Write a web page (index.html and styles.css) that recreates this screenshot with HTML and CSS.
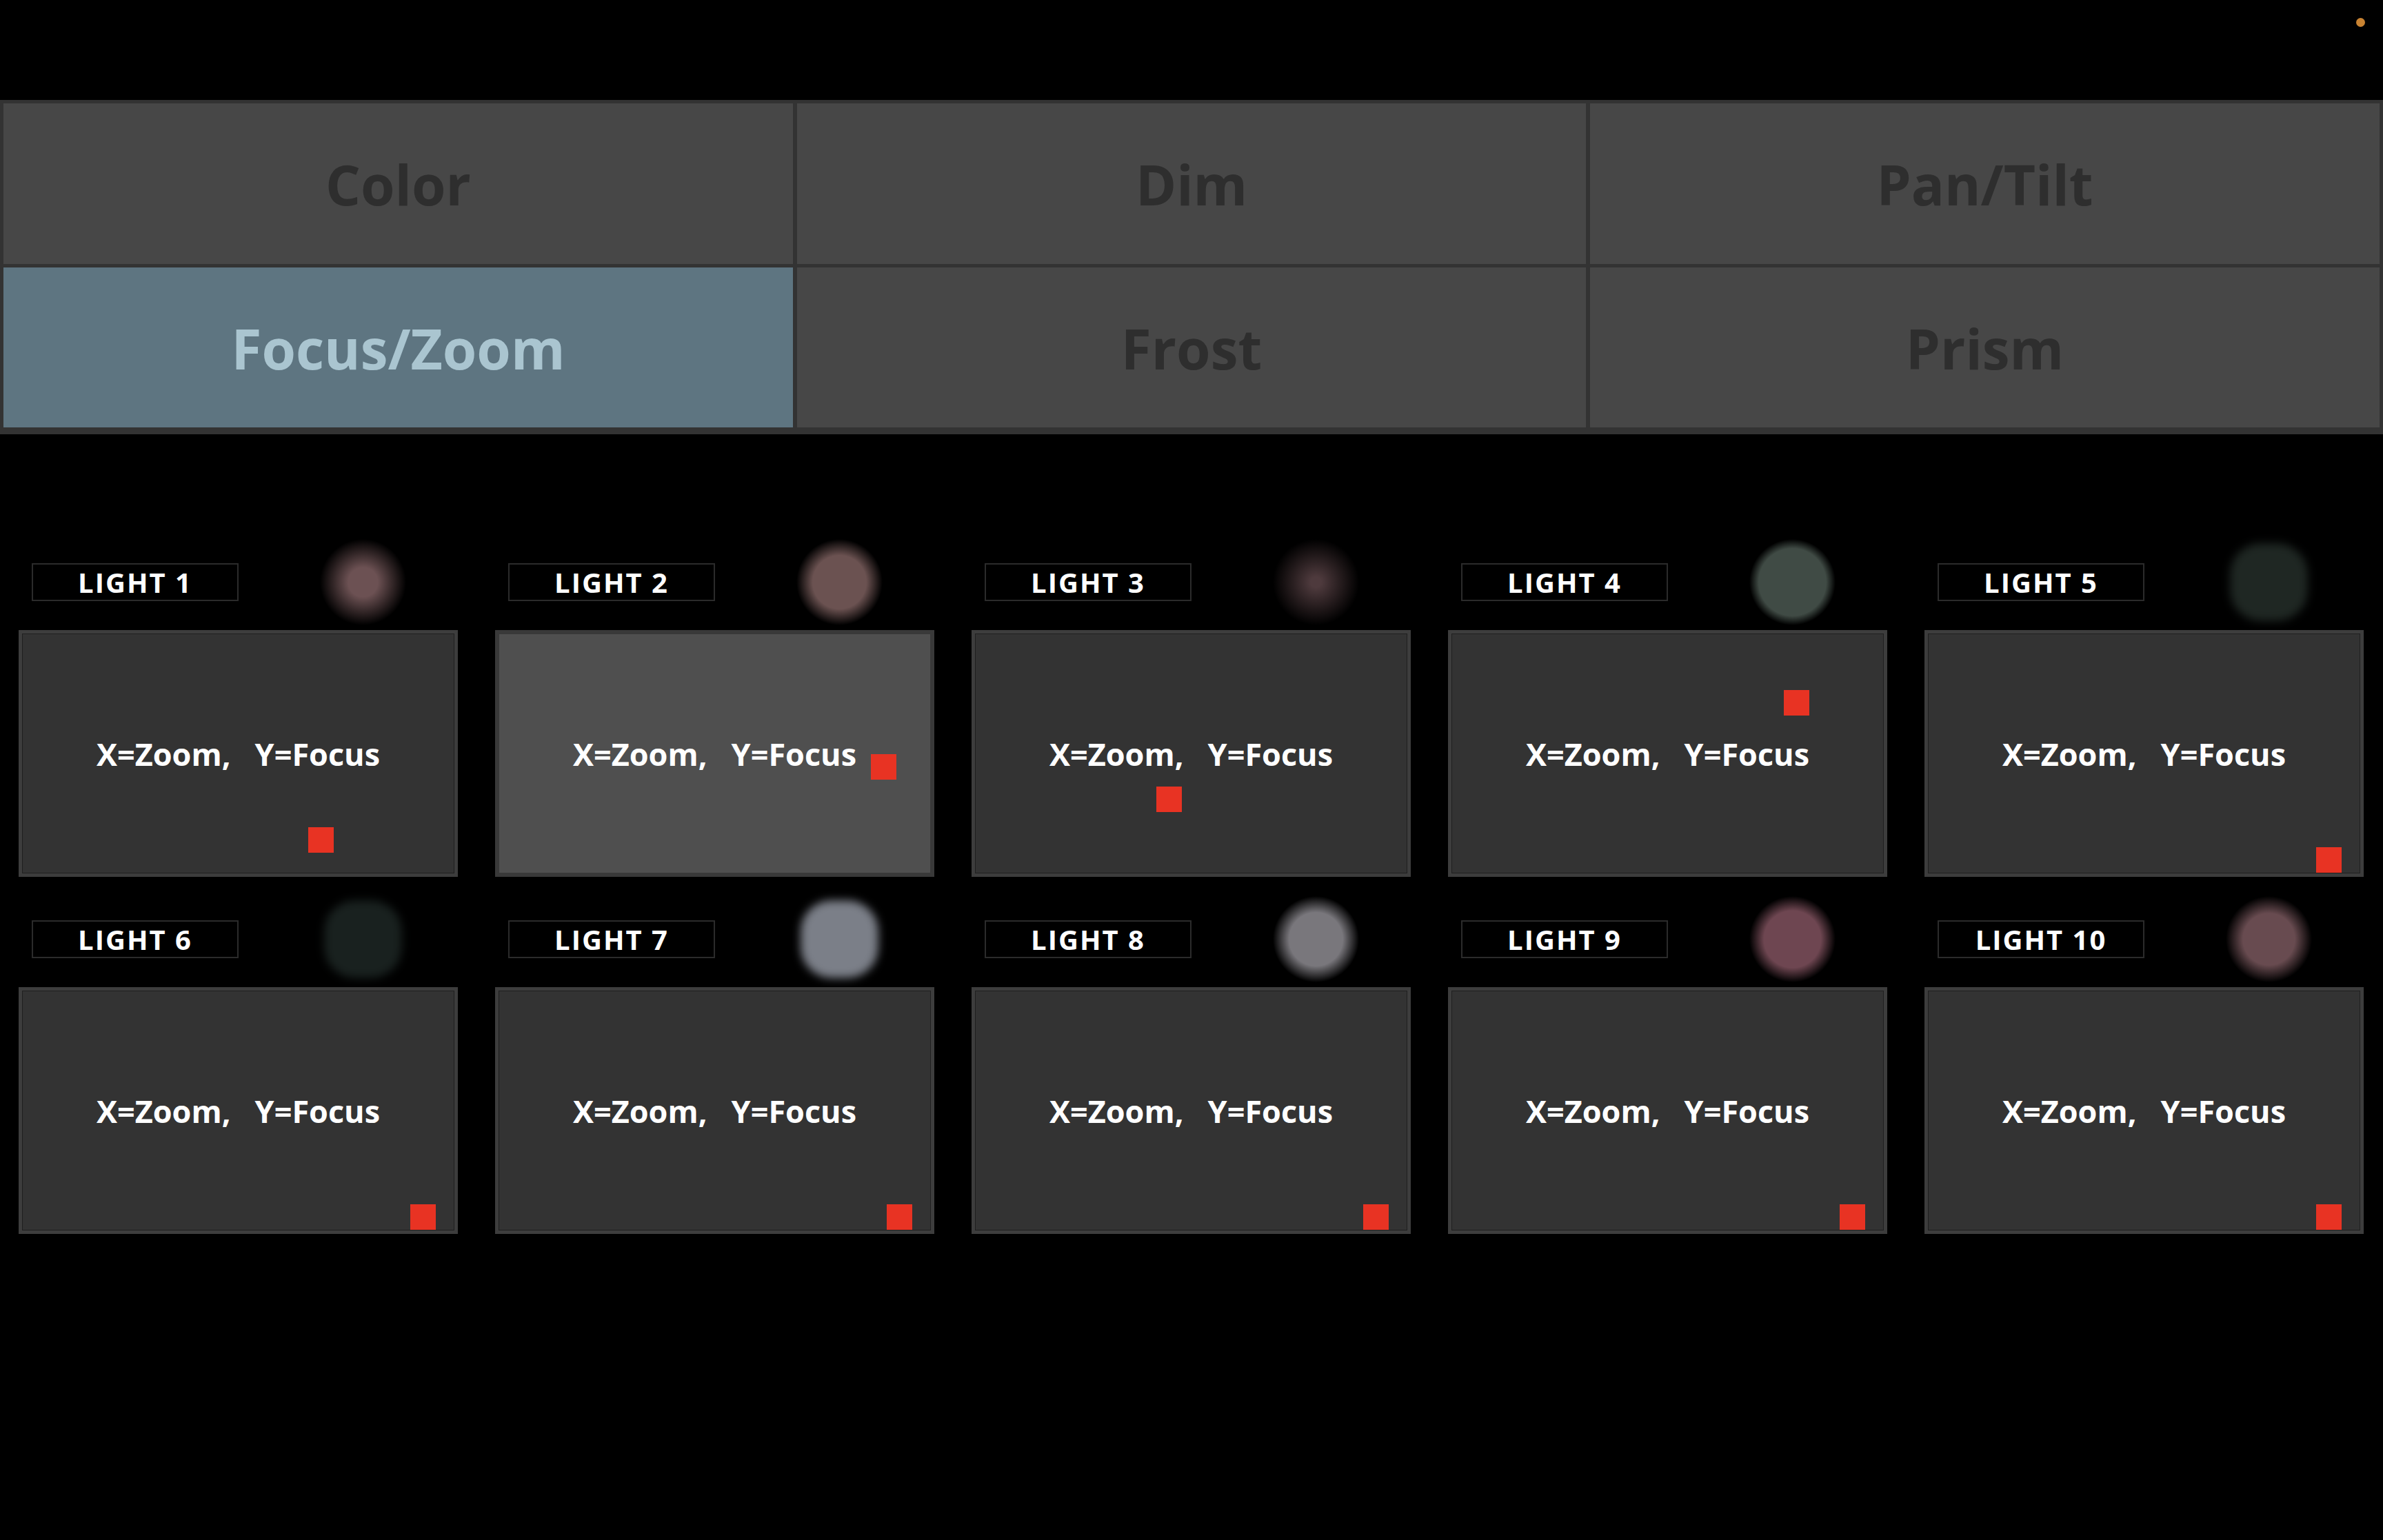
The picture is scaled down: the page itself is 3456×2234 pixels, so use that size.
FILE: index.html
```html
<!DOCTYPE html>
<html lang="en">

<head>
  <meta charset="UTF-8" />
  <meta name="viewport" content="width=device-width, initial-scale=1.0" />
  <title>Focus/Zoom</title>
  <link rel="stylesheet" href="styles.css">
</head>

<body>
  <div class="status-dot"></div>

  <div class="tabs">
    <div class="tab">Color</div>
    <div class="tab">Dim</div>
    <div class="tab">Pan/Tilt</div>
    <div class="tab active">Focus/Zoom</div>
    <div class="tab">Frost</div>
    <div class="tab">Prism</div>
  </div>

  <div class="lights">
    <div class="light">
      <div class="light-head">
        <div class="light-label">LIGHT 1</div>
        <div class="glow" style="--c:#6c5153;--s:34%"></div>
      </div>
      <div class="pad">
        <span class="pad-text">X=Zoom,   Y=Focus</span>
        <span class="marker" style="left:415px;top:281px"></span>
      </div>
    </div>
    <div class="light">
      <div class="light-head">
        <div class="light-label">LIGHT 2</div>
        <div class="glow" style="--c:#6b5251;--s:62%"></div>
      </div>
      <div class="pad active">
        <span class="pad-text">X=Zoom,   Y=Focus</span>
        <span class="marker" style="left:539px;top:174px"></span>
      </div>
    </div>
    <div class="light">
      <div class="light-head">
        <div class="light-label">LIGHT 3</div>
        <div class="glow" style="--c:#4e3a3d;--s:12%"></div>
      </div>
      <div class="pad">
        <span class="pad-text">X=Zoom,   Y=Focus</span>
        <span class="marker" style="left:263px;top:222px"></span>
      </div>
    </div>
    <div class="light">
      <div class="light-head">
        <div class="light-label">LIGHT 4</div>
        <div class="glow" style="--c:#404b45;--s:78%"></div>
      </div>
      <div class="pad">
        <span class="pad-text">X=Zoom,   Y=Focus</span>
        <span class="marker" style="left:482px;top:82px"></span>
      </div>
    </div>
    <div class="light">
      <div class="light-head">
        <div class="light-label">LIGHT 5</div>
        <div class="glow square" style="--c:#1f2723"></div>
      </div>
      <div class="pad">
        <span class="pad-text">X=Zoom,   Y=Focus</span>
        <span class="marker" style="left:563px;top:310px"></span>
      </div>
    </div>

    <div class="light">
      <div class="light-head">
        <div class="light-label">LIGHT 6</div>
        <div class="glow square" style="--c:#19211f"></div>
      </div>
      <div class="pad">
        <span class="pad-text">X=Zoom,   Y=Focus</span>
        <span class="marker" style="left:563px;top:310px"></span>
      </div>
    </div>
    <div class="light">
      <div class="light-head">
        <div class="light-label">LIGHT 7</div>
        <div class="glow square" style="--c:#7b7f88"></div>
      </div>
      <div class="pad">
        <span class="pad-text">X=Zoom,   Y=Focus</span>
        <span class="marker" style="left:563px;top:310px"></span>
      </div>
    </div>
    <div class="light">
      <div class="light-head">
        <div class="light-label">LIGHT 8</div>
        <div class="glow" style="--c:#79777c;--s:62%"></div>
      </div>
      <div class="pad">
        <span class="pad-text">X=Zoom,   Y=Focus</span>
        <span class="marker" style="left:563px;top:310px"></span>
      </div>
    </div>
    <div class="light">
      <div class="light-head">
        <div class="light-label">LIGHT 9</div>
        <div class="glow" style="--c:#6e4651;--s:66%"></div>
      </div>
      <div class="pad">
        <span class="pad-text">X=Zoom,   Y=Focus</span>
        <span class="marker" style="left:563px;top:310px"></span>
      </div>
    </div>
    <div class="light">
      <div class="light-head">
        <div class="light-label">LIGHT 10</div>
        <div class="glow" style="--c:#684b50;--s:60%"></div>
      </div>
      <div class="pad">
        <span class="pad-text">X=Zoom,   Y=Focus</span>
        <span class="marker" style="left:563px;top:310px"></span>
      </div>
    </div>
  </div>
</body>

</html>
```

FILE: styles.css
```css
* {
  padding: 0;
  margin: 0;
  box-sizing: border-box;
}

html,
body {
  background: #000;
}

body {
  position: relative;
  min-height: 2234px;
  font-family: "Open Sans", "Noto Sans", sans-serif;
  color: #fff;
}

.status-dot {
  position: absolute;
  top: 26px;
  right: 26px;
  width: 13px;
  height: 13px;
  border-radius: 50%;
  background: #c98332;
}

.tabs {
  margin-top: 145px;
  display: grid;
  grid-template-columns: 1145px 1144px 1145px;
  grid-template-rows: 233px 232px;
  gap: 5px 6px;
  padding: 5px 5px 10px;
  background: #333;
}

.tab {
  display: flex;
  align-items: center;
  justify-content: center;
  background: #474747;
  color: #2e2e2e;
  font-size: 80px;
  font-weight: 700;
}

.tab.active {
  background: #5e7581;
  color: #aac5d0;
}

.lights {
  margin-top: 152px;
  display: grid;
  grid-template-columns: repeat(5, 637px);
  column-gap: 54px;
  row-gap: 28px;
  padding: 0 27px;
}

.light-head {
  height: 125px;
  margin-bottom: 7px;
  display: flex;
  align-items: center;
}

.light-label {
  width: 300px;
  height: 55px;
  margin-left: 19px;
  border: 2px solid #2b2b2b;
  display: flex;
  align-items: center;
  justify-content: center;
  font-size: 40px;
  font-weight: 700;
  letter-spacing: 2px;
}

.glow {
  width: 125px;
  height: 125px;
  margin-left: 118px;
  background: radial-gradient(closest-side, var(--c) var(--s), transparent 100%);
}

.glow.square {
  background: var(--c);
  border-radius: 40%;
  filter: blur(7px);
  transform: scale(0.9);
}

.pad {
  position: relative;
  height: 358px;
  display: flex;
  align-items: center;
  justify-content: center;
  background: #333;
  border: 5px solid #3d3d3d;
  box-shadow: inset 0 0 0 1px #1f1f1f;
}

.pad.active {
  background: #4f4f4f;
  border: 6px solid #393939;
  box-shadow: none;
}

.pad-text {
  white-space: pre;
  font-size: 45px;
  font-weight: 700;
}

.marker {
  position: absolute;
  width: 37px;
  height: 37px;
  background: #e83323;
}
```
